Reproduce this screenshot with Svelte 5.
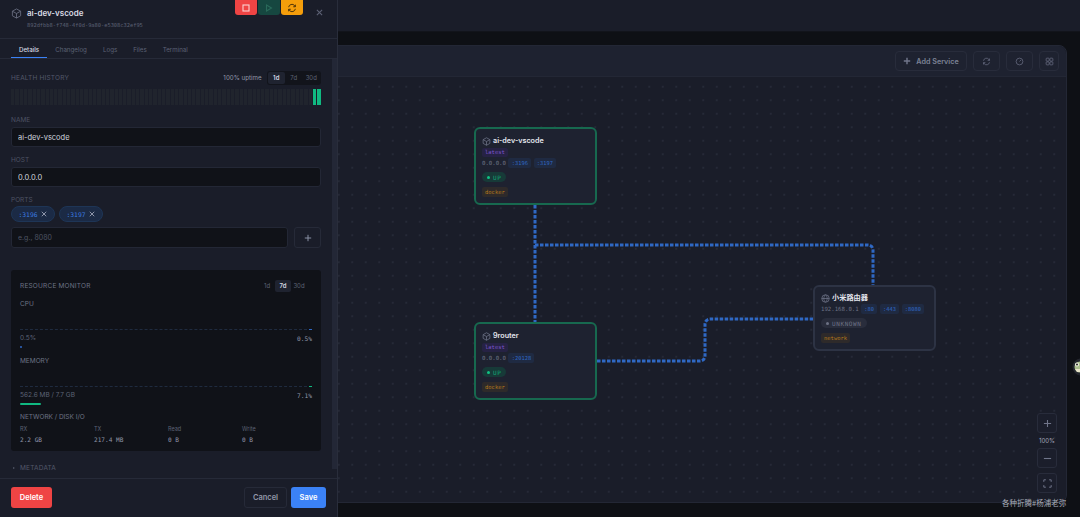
<script>
  const ticks = Array.from({ length: 72 }, (_, i) => i >= 70);
  const ports = [':3196', ':3197'];
  const stats = [
    { label: 'RX', value: '2.2 GB' },
    { label: 'TX', value: '217.4 MB' },
    { label: 'Read', value: '0 B' },
    { label: 'Write', value: '0 B' }
  ];
  const nodes = [
    { id: 'a', cls: 'n1', name: 'ai-dev-vscode', kind: 'box', tag: 'latest', host: '0.0.0.0', ports: [':3196', ':3197'], up: true, type: 'docker' },
    { id: 'b', cls: 'n2', name: '9router', kind: 'box', tag: 'latest', host: '0.0.0.0', ports: [':20128'], up: true, type: 'docker' },
    { id: 'c', cls: 'n3', name: '小米路由器', kind: 'globe', host: '192.168.0.1', ports: [':80', ':443', ':8080'], up: false, type: 'network' }
  ];
</script>

<div class="page">
  <div class="topbar"></div>
  <main class="main">
    <section class="card">
      <div class="toolbar">
        <button class="tool add">
          <svg width="8" height="8" viewBox="0 0 10 10"><path d="M5 1v8M1 5h8" /></svg>
          Add Service
        </button>
        <button class="tool sq">
          <svg width="9" height="9" viewBox="0 0 24 24"><path d="M4 10a8 8 0 0 1 14-4l2 3M20 14a8 8 0 0 1-14 4l-2-3M20 4v5h-5M4 20v-5h5" /></svg>
        </button>
        <button class="tool sq">
          <svg width="9" height="9" viewBox="0 0 24 24"><circle cx="12" cy="12" r="9" /><path d="M12 12l4-4" /></svg>
        </button>
        <button class="tool sq small">
          <svg width="9" height="9" viewBox="0 0 24 24"><rect x="3" y="3" width="8" height="8" rx="2" /><rect x="13" y="3" width="8" height="8" rx="2" /><rect x="3" y="13" width="8" height="8" rx="2" /><rect x="13" y="13" width="8" height="8" rx="2" /></svg>
        </button>
      </div>
      <div class="canvas">
        <svg class="wires" width="1080" height="517" viewBox="0 0 1080 517">
          <path d="M535 205V322" />
          <path d="M535 245H868a5 5 0 0 1 5 5V285" />
          <path d="M597 361H700a5 5 0 0 0 5-5V324a5 5 0 0 1 5-5H813" />
        </svg>
        {#each nodes as node (node.id)}
          <div class="node {node.cls}" class:up={node.up}>
            <div class="node-title">
              {#if node.kind === 'box'}
                <svg width="9" height="9" viewBox="0 0 24 24"><path d="M12 2l9 5v10l-9 5-9-5V7zM3 7l9 5 9-5M12 12v10" /></svg>
              {:else}
                <svg width="9" height="9" viewBox="0 0 24 24"><circle cx="12" cy="12" r="10" /><path d="M2 12h20M12 2c-6 6-6 14 0 20M12 2c6 6 6 14 0 20" /></svg>
              {/if}
              <span>{node.name}</span>
            </div>
            {#if node.tag}<span class="mono tag">{node.tag}</span>{/if}
            <div class="addr">
              <span class="mono host">{node.host}</span>
              {#each node.ports as p}<span class="mono port">{p}</span>{/each}
            </div>
            <span class="mono status"><i></i>{node.up ? 'UP' : 'UNKNOWN'}</span>
            <span class="mono type">{node.type}</span>
          </div>
        {/each}
        <div class="zoom">
          <button class="zbtn"><svg width="9" height="9" viewBox="0 0 10 10"><path d="M5 1v8M1 5h8" /></svg></button>
          <span class="zlabel">100%</span>
          <button class="zbtn"><svg width="9" height="9" viewBox="0 0 10 10"><path d="M1 5h8" /></svg></button>
          <button class="zbtn full"><svg width="9" height="9" viewBox="0 0 11 11"><path d="M1 3.500V1h2.500M7.500 1H10v2.500M10 7.500V10H7.500M3.500 10H1V7.500" /></svg></button>
        </div>
      </div>
    </section>
  </main>

  <aside class="drawer">
    <header class="head">
      <svg class="cube" width="11" height="11" viewBox="0 0 24 24"><path d="M12 2l9 5v10l-9 5-9-5V7zM3 7l9 5 9-5M12 12v10" /></svg>
      <div>
        <h1>ai-dev-vscode</h1>
        <p class="mono uuid">892dfbb8-f748-4f0d-9a80-e5308c32ef95</p>
      </div>
      <div class="actions">
        <button class="act red"><svg width="8" height="8" viewBox="0 0 8 8"><rect x="1" y="1" width="6" height="6" /></svg></button>
        <button class="act green"><svg width="8" height="8" viewBox="0 0 8 8"><path d="M1.500 1l5 3-5 3z" /></svg></button>
        <button class="act orange"><svg width="10" height="10" viewBox="0 0 24 24"><path d="M4 10a8 8 0 0 1 14-4l2 3M20 14a8 8 0 0 1-14 4l-2-3M20 4v5h-5M4 20v-5h5" /></svg></button>
      </div>
      <svg class="close" width="7" height="7" viewBox="0 0 8 8"><path d="M1 1l6 6M7 1L1 7" /></svg>
    </header>

    <nav class="tabs">
      <span class="tab active">Details</span>
      <span class="tab">Changelog</span>
      <span class="tab">Logs</span>
      <span class="tab">Files</span>
      <span class="tab">Terminal</span>
    </nav>

    <div class="body">
      <div class="content">
        <div class="health-head">
          <span class="section">HEALTH HISTORY</span>
          <span class="uptime">100% uptime</span>
          <div class="range">
            <span class="on">1d</span><span>7d</span><span>30d</span>
          </div>
        </div>
        <div class="ticks">
          {#each ticks as green}<i class:green></i>{/each}
        </div>

        <label class="field-label first" for="name">NAME</label>
        <input id="name" class="input" value="ai-dev-vscode" />
        <label class="field-label" for="host">HOST</label>
        <input id="host" class="input" value="0.0.0.0" />
        <span class="field-label">PORTS</span>
        <div class="chips">
          {#each ports as p}
            <span class="chip"><b class="mono">{p}</b><svg width="6" height="6" viewBox="0 0 8 8"><path d="M1 1l6 6M7 1L1 7" /></svg></span>
          {/each}
        </div>
        <div class="port-row">
          <input class="input grow" placeholder="e.g., 8080" />
          <button class="plus"><svg width="8" height="8" viewBox="0 0 10 10"><path d="M5 1v8M1 5h8" /></svg></button>
        </div>

        <div class="monitor">
          <div class="mon-head">
            <span>RESOURCE MONITOR</span>
            <div class="mon-range"><span>1d</span><span class="on">7d</span><span>30d</span></div>
          </div>
          <div class="metric-name">CPU</div>
          <div class="chart"><i class="blue"></i></div>
          <div class="metric-row"><span>0.5%</span><span class="mono">0.5%</span></div>
          <div class="bar"><i class="blue w-cpu"></i></div>
          <div class="metric-name mem">MEMORY</div>
          <div class="chart"><i class="emerald"></i></div>
          <div class="metric-row"><span>562.6 MB / 7.7 GB</span><span class="mono">7.1%</span></div>
          <div class="bar"><i class="emerald w-mem"></i></div>
          <div class="metric-name net">NETWORK / DISK I/O</div>
          <div class="stats">
            {#each stats as s}
              <div>
                <div class="stat-label">{s.label}</div>
                <div class="mono stat-value">{s.value}</div>
              </div>
            {/each}
          </div>
        </div>

        <div class="meta"><span class="caret"></span>METADATA</div>
      </div>
      <div class="scroll"></div>
    </div>

    <footer class="foot">
      <button class="btn delete">Delete</button>
      <span class="spacer"></span>
      <button class="btn cancel">Cancel</button>
      <button class="btn save">Save</button>
    </footer>
  </aside>

  <svg class="frog" width="8" height="18" viewBox="0 0 8 18">
    <circle cx="9" cy="9" r="8.500" fill="#23262e" />
    <circle cx="8" cy="9" r="5.500" fill="#a9bd8c" />
    <circle cx="5" cy="6.500" r="2" fill="#f1f1e6" />
    <circle cx="5" cy="6.500" r="1" fill="#22241f" />
    <path d="M3 11h5v3H5z" fill="#e7e3c8" />
  </svg>
  <span class="mark">各种折腾#杨浦老弥</span>
</div>

<style>
  :global(body) {
    margin: 0;
    background: #0e1015;
    font-family: Inter, "Noto Sans CJK SC", sans-serif;
    overflow: hidden;
  }
  button {
    font-family: inherit;
    padding: 0;
    cursor: pointer;
  }
  .mono {
    font-family: "DejaVu Sans Mono", "Liberation Mono", monospace;
  }
  .page {
    position: relative;
    width: 1080px;
    height: 517px;
    overflow: hidden;
  }
  .topbar {
    height: 32px;
    background: #1a1d29;
    border-bottom: 1px solid #12141b;
    box-sizing: border-box;
  }
  .main {
    padding: 13px 13px 14px 300px;
    box-sizing: border-box;
    height: 485px;
  }
  .card {
    height: 100%;
    border: 1px solid #232735;
    border-radius: 8px;
    background: #1a1d29;
    display: flex;
    flex-direction: column;
    box-sizing: border-box;
  }
  .toolbar {
    height: 30px;
    flex: none;
    display: flex;
    justify-content: flex-end;
    align-items: center;
    gap: 6px;
    padding: 0 7px;
    background: #1e2230;
    border-radius: 8px 8px 0 0;
    border-bottom: 1px solid #232735;
  }
  .tool {
    height: 20px;
    width: 27px;
    display: flex;
    align-items: center;
    justify-content: center;
    gap: 5px;
    border: 1px solid #282c3b;
    border-radius: 4px;
    background: transparent;
    color: #7d8296;
    font-size: 7.200px;
    font-weight: 600;
  }
  .tool svg {
    fill: none;
    stroke: #70758a;
    stroke-width: 1.800;
  }
  .tool.add {
    width: 72px;
  }
  .tool.small {
    width: 20px;
  }
  .canvas {
    position: relative;
    flex: 1;
    background-color: #1a1d29;
    background-image: radial-gradient(circle, #2a2e3d 0.6px, transparent 0.9px);
    background-size: 13.500px 13.500px;
    background-position: 4px 3px;
    border-radius: 0 0 8px 8px;
  }
  .wires {
    position: absolute;
    left: -301px;
    top: -77px;
    fill: none;
    stroke: #2f68c4;
    stroke-width: 3;
    stroke-dasharray: 3.500 1.500;
    pointer-events: none;
  }
  .node {
    position: absolute;
    width: 123px;
    box-sizing: border-box;
    padding: 6px;
    border: 2px solid #2d3344;
    border-radius: 6px;
    background: #1e2230;
    display: flex;
    flex-direction: column;
    align-items: flex-start;
  }
  .node.up {
    border-color: #17694f;
  }
  .n1 { left: 173px; top: 50px; height: 78px; }
  .n2 { left: 173px; top: 245px; height: 78px; }
  .n3 { left: 512px; top: 208px; height: 66px; padding-top: 5px; }
  .node-title {
    display: flex;
    align-items: center;
    gap: 2px;
    color: #e4e6ee;
    font-size: 7.200px;
    font-weight: 600;
    line-height: 12px;
  }
  .node-title svg {
    fill: none;
    stroke: #70758a;
    stroke-width: 2;
  }
  .tag {
    margin-top: 1px;
    height: 9px;
    line-height: 9px;
    padding: 0 3px;
    font-size: 5.500px;
    color: #7c54c8;
    background: #262244;
    border-radius: 2px;
  }
  .addr {
    display: flex;
    align-items: center;
    gap: 2.500px;
    margin-top: 1px;
    height: 11px;
  }
  .n3 .addr {
    margin-top: 0;
  }
  .host {
    font-size: 5.700px;
    color: #6d7285;
  }
  .port {
    font-size: 5.400px;
    color: #2f68c4;
    background: #1f2a42;
    padding: 0 3.200px;
    border-radius: 2px;
    line-height: 10px;
  }
  .status {
    margin-top: 4px;
    height: 11px;
    display: flex;
    align-items: center;
    gap: 3px;
    padding: 0 5px;
    border-radius: 6px;
    font-size: 6px;
    letter-spacing: 0.6px;
    color: #6d7285;
    background: #292d3c;
  }
  .status i {
    width: 3px;
    height: 3px;
    border-radius: 50%;
    background: #6d7285;
  }
  .up .status {
    color: #12a574;
    background: #173a38;
  }
  .up .status i {
    background: #10c384;
  }
  .type {
    margin-top: 5px;
    height: 10px;
    line-height: 10px;
    padding: 0 3px;
    font-size: 5.500px;
    color: #b5791b;
    background: #2e2a2a;
    border-radius: 2px;
  }
  .zoom {
    position: absolute;
    right: 9px;
    bottom: 9px;
    display: flex;
    flex-direction: column;
    align-items: center;
  }
  .zbtn {
    width: 20px;
    height: 20px;
    border: 1px solid #282c3b;
    border-radius: 3px;
    background: #1b1e2b;
    display: flex;
    align-items: center;
    justify-content: center;
  }
  .zbtn svg {
    fill: none;
    stroke: #70758a;
    stroke-width: 1.200;
  }
  .zbtn.full {
    margin-top: 5px;
  }
  .zlabel {
    font-size: 6px;
    line-height: 15px;
    color: #a3a8ba;
  }

  .drawer {
    position: absolute;
    left: 0;
    top: 0;
    width: 338px;
    height: 517px;
    box-sizing: border-box;
    background: #1a1d29;
    border-right: 1px solid #292d3b;
    display: flex;
    flex-direction: column;
  }
  .head {
    position: relative;
    height: 39px;
    flex: none;
    box-sizing: border-box;
    display: flex;
    align-items: flex-start;
    gap: 5px;
    padding: 8px 11px 0 11px;
    border-bottom: 1px solid #262a38;
  }
  .cube {
    fill: none;
    stroke: #6d7285;
    stroke-width: 1.800;
  }
  h1 {
    margin: 0;
    font-size: 8px;
    font-weight: 600;
    line-height: 11px;
    color: #d9dbe4;
  }
  .uuid {
    margin: 2px 0 0;
    font-size: 5.350px;
    line-height: 8px;
    color: #5d6275;
  }
  .actions {
    position: absolute;
    left: 235px;
    top: 0;
    display: flex;
    gap: 1px;
  }
  .act {
    width: 22px;
    height: 15px;
    border: 0;
    border-radius: 0 0 3px 3px;
    display: flex;
    align-items: center;
    justify-content: center;
  }
  .act svg {
    fill: none;
    stroke-width: 1.100;
  }
  .red { background: #ef4444; }
  .red svg { stroke: #fbd0d0; }
  .green { background: #164740; }
  .green svg { stroke: #2a6a5a; }
  .orange { background: #f59e0b; }
  .orange svg { stroke: #4d3208; stroke-width: 2.400; }
  .close {
    position: absolute;
    left: 316px;
    top: 9px;
    fill: none;
    stroke: #5d6275;
    stroke-width: 1.200;
  }
  .tabs {
    flex: none;
    height: 20px;
    box-sizing: border-box;
    display: flex;
    align-items: center;
    padding-left: 11px;
    border-bottom: 1px solid #262a38;
  }
  .tab {
    height: 19px;
    line-height: 21px;
    padding: 0 8px;
    font-size: 6.200px;
    color: #5d6275;
    box-sizing: border-box;
  }
  .tab.active {
    color: #d6d9e3;
    font-weight: 500;
    border-bottom: 1px solid #3b82f6;
  }
  .body {
    flex: 1;
    min-height: 0;
    display: flex;
    overflow: hidden;
    border-bottom: 1px solid #262a38;
  }
  .content {
    width: 310px;
    padding: 11px 0 0 11px;
    flex: none;
  }
  .scroll {
    width: 5px;
    height: 410px;
    margin-left: 11px;
    background: #232736;
  }
  .health-head {
    height: 15px;
    display: flex;
    align-items: center;
  }
  .section {
    flex: 1;
    font-size: 6.500px;
    letter-spacing: 0.2px;
    color: #535869;
  }
  .uptime {
    font-size: 6.200px;
    color: #9297a8;
    margin-right: 5px;
  }
  .range {
    display: flex;
    background: #12141b;
    border-radius: 3px;
    padding: 1px;
  }
  .range span {
    width: 17.500px;
    height: 12px;
    line-height: 12px;
    text-align: center;
    font-size: 6px;
    color: #5d6275;
    border-radius: 2px;
  }
  .range .on {
    background: #1f2330;
    color: #d6d9e3;
    font-weight: 600;
  }
  .ticks {
    display: flex;
    gap: 1px;
    height: 16px;
    margin-top: 4px;
  }
  .ticks i {
    flex: 1;
    background: #20242d;
  }
  .ticks i.green {
    background: #10b981;
  }
  .field-label {
    display: block;
    font-size: 6.500px;
    line-height: 8px;
    margin: 9px 0 3px;
    color: #4d5263;
  }
  .field-label.first {
    margin-top: 11px;
  }
  .input {
    display: block;
    width: 100%;
    height: 20px;
    box-sizing: border-box;
    padding: 0 6px;
    border: 1px solid #232735;
    border-radius: 3px;
    background: #101218;
    color: #cfd2dc;
    font-family: inherit;
    font-size: 7.500px;
    outline: none;
  }
  .input::placeholder {
    color: #4d5263;
    font-size: 7px;
  }
  .chips {
    display: flex;
    gap: 4px;
    margin-top: -1px;
  }
  .chip {
    height: 16px;
    width: 44px;
    box-sizing: border-box;
    display: flex;
    align-items: center;
    justify-content: center;
    gap: 4px;
    border: 1px solid #1e3556;
    border-radius: 8px;
    background: #1b2a45;
    font-size: 6.300px;
  }
  .chip b {
    font-weight: 400;
    color: #3b7de0;
  }
  .chip svg {
    fill: none;
    stroke: #9aa0b4;
    stroke-width: 1.200;
  }
  .port-row {
    display: flex;
    gap: 6px;
    margin-top: 5px;
  }
  .grow {
    flex: 1;
    width: auto;
    min-width: 0;
    height: 21px;
  }
  .plus {
    width: 27px;
    height: 21px;
    border: 1px solid #262a38;
    border-radius: 3px;
    background: #1a1d29;
    display: flex;
    align-items: center;
    justify-content: center;
  }
  .plus svg {
    fill: none;
    stroke: #8d93a8;
    stroke-width: 1.200;
  }
  .monitor {
    margin-top: 22px;
    height: 181px;
    box-sizing: border-box;
    padding: 10px 9px;
    border-radius: 3px;
    background: #101218;
  }
  .mon-head {
    height: 12px;
    display: flex;
    justify-content: space-between;
    align-items: center;
    font-size: 6.500px;
    letter-spacing: 0.2px;
    color: #6d7285;
  }
  .mon-range {
    display: flex;
    margin-right: 5px;
  }
  .mon-range span {
    width: 16px;
    height: 12px;
    line-height: 12px;
    text-align: center;
    font-size: 6px;
    letter-spacing: 0;
    color: #5d6275;
    border-radius: 2px;
  }
  .mon-range span.on {
    background: #1f2330;
    color: #d6d9e3;
    font-weight: 600;
  }
  .metric-name {
    margin-top: 7px;
    font-size: 6.500px;
    line-height: 10px;
    color: #6d7285;
  }
  .metric-name.mem {
    margin-top: 8px;
  }
  .chart {
    height: 20px;
    border-bottom: 1px dashed #1f2b3f;
    position: relative;
  }
  .metric-name.net {
    margin-top: 7px;
  }
  .chart i {
    position: absolute;
    right: 0;
    bottom: -1px;
    width: 3px;
    height: 1px;
  }
  .blue { background: #2f68c4; }
  .emerald { background: #10b981; }
  .metric-row {
    display: flex;
    justify-content: space-between;
    margin-top: 4px;
    font-size: 6.500px;
    line-height: 9px;
    color: #5d6275;
  }
  .metric-row .mono {
    font-size: 6.200px;
    color: #9297a8;
  }
  .bar {
    height: 2px;
    margin-top: 3px;
  }
  .bar i {
    display: block;
    height: 2px;
    border-radius: 1px;
  }
  .w-cpu { width: 2px; }
  .w-mem { width: 21px; }
  .stats {
    display: grid;
    grid-template-columns: repeat(4, 74px);
    margin-top: 3px;
  }
  .stat-label {
    font-size: 5.500px;
    line-height: 8px;
    color: #5d6275;
  }
  .stat-value {
    margin-top: 2px;
    font-size: 6.100px;
    line-height: 9px;
    color: #9297a8;
  }
  .meta {
    margin-top: 13px;
    display: flex;
    align-items: center;
    gap: 5px;
    font-size: 6.500px;
    letter-spacing: 0.2px;
    color: #535869;
  }
  .caret {
    width: 0;
    height: 0;
    margin-left: 2px;
    border-left: 2px solid #535869;
    border-top: 1.500px solid transparent;
    border-bottom: 1.500px solid transparent;
  }
  .foot {
    height: 38px;
    flex: none;
    box-sizing: border-box;
    display: flex;
    align-items: flex-start;
    gap: 4px;
    padding: 8px 11px 0;
  }
  .spacer {
    flex: 1;
  }
  .btn {
    height: 21px;
    border-radius: 3px;
    border: 1px solid transparent;
    font-size: 7.500px;
    font-weight: 600;
    color: #fff;
  }
  .delete { width: 41px; background: #ef4444; }
  .cancel { width: 43px; background: transparent; border-color: #262a38; color: #9297a8; }
  .save { width: 35px; background: #3b82f6; }
  .frog {
    position: absolute;
    right: 0;
    top: 358px;
  }
  .mark {
    position: absolute;
    left: 1002px;
    top: 497px;
    font-family: "Noto Sans CJK SC", sans-serif;
    font-size: 7.500px;
    line-height: 12px;
    color: #a9adb8;
  }
</style>
